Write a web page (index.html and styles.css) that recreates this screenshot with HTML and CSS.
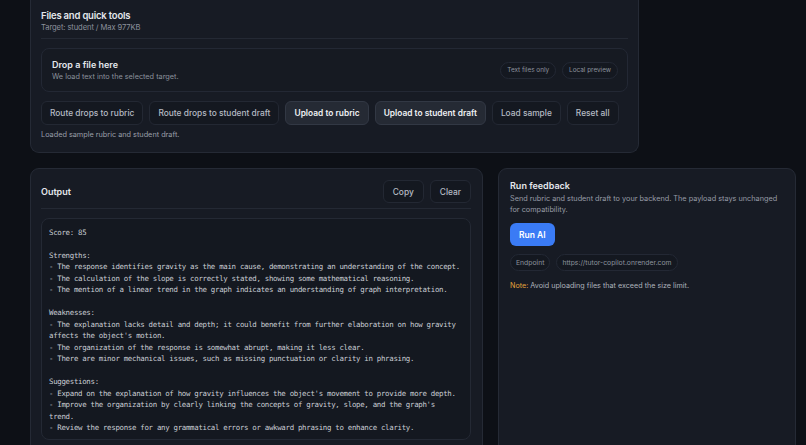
FILE: index.html
```html
<!DOCTYPE html>
<html lang="en">
<head>
    <meta charset="UTF-8">
    <meta name="viewport" content="width=device-width, initial-scale=1.0">
    <title>Tutor Copilot</title>
    <link rel="stylesheet" href="styles.css">
</head>
<body>
    <div class="page">
        <!-- Files and quick tools -->
        <section class="panel tools-panel">
            <div class="panel-head">
                <h2>Files and quick tools</h2>
                <p class="muted">Target: student / Max 977KB</p>
            </div>

            <div class="drop-zone">
                <div>
                    <h3>Drop a file here</h3>
                    <p class="muted">We load text into the selected target.</p>
                </div>
                <div class="chips">
                    <span class="chip">Text files only</span>
                    <span class="chip">Local preview</span>
                </div>
            </div>

            <div class="button-row">
                <button class="btn">Route drops to rubric</button>
                <button class="btn">Route drops to student draft</button>
                <button class="btn strong">Upload to rubric</button>
                <button class="btn strong">Upload to student draft</button>
                <button class="btn">Load sample</button>
                <button class="btn">Reset all</button>
            </div>

            <p class="status">Loaded sample rubric and student draft.</p>
        </section>

        <div class="columns">
            <!-- Output -->
            <section class="panel output-panel">
                <div class="output-head">
                    <h2>Output</h2>
                    <div class="head-actions">
                        <button class="btn">Copy</button>
                        <button class="btn">Clear</button>
                    </div>
                </div>
                <pre class="output-box">Score: 85

Strengths:
- The response identifies gravity as the main cause, demonstrating an understanding of the concept.
- The calculation of the slope is correctly stated, showing some mathematical reasoning.
- The mention of a linear trend in the graph indicates an understanding of graph interpretation.

Weaknesses:
- The explanation lacks detail and depth; it could benefit from further elaboration on how gravity affects the object's motion.
- The organization of the response is somewhat abrupt, making it less clear.
- There are minor mechanical issues, such as missing punctuation or clarity in phrasing.

Suggestions:
- Expand on the explanation of how gravity influences the object's movement to provide more depth.
- Improve the organization by clearly linking the concepts of gravity, slope, and the graph's trend.
- Review the response for any grammatical errors or awkward phrasing to enhance clarity.</pre>
            </section>

            <!-- Run feedback -->
            <section class="panel run-panel">
                <h3>Run feedback</h3>
                <p class="muted desc">Send rubric and student draft to your backend. The payload stays unchanged for compatibility.</p>
                <button class="btn-primary">Run AI</button>
                <div class="chips endpoint">
                    <span class="chip">Endpoint</span>
                    <span class="chip">https://tutor-copilot.onrender.com</span>
                </div>
                <p class="note"><span class="note-label">Note:</span> Avoid uploading files that exceed the size limit.</p>
            </section>
        </div>
    </div>
</body>
</html>
```

FILE: styles.css
```css
html, body {
    margin: 0;
    height: 100%;
    overflow: hidden;
}

body {
    font-family: Inter, "Noto Sans", sans-serif;
    background-color: #0d1016;
    color: #e4e7ec;
}

h2, h3, p {
    margin: 0;
}

.page {
    padding: 0 10px 0 30px;
}

.panel {
    background-color: #171b24;
    border: 1px solid #252a35;
    border-radius: 9px;
    box-sizing: border-box;
}

.muted {
    color: #8b919c;
}

/* top panel */
.tools-panel {
    width: 609px;
    padding: 10px 10px 12px 10px;
    border-top: none;
    border-top-left-radius: 0;
    border-top-right-radius: 0;
}

.panel-head {
    padding-bottom: 5px;
    border-bottom: 1px solid #242934;
}

.panel-head h2 {
    font-size: 9.5px;
    font-weight: 600;
    line-height: 12px;
    letter-spacing: -0.2px;
}

.panel-head .muted {
    margin-top: 1px;
    font-size: 7.6px;
    line-height: 10px;
    letter-spacing: -0.1px;
}

.drop-zone {
    margin-top: 9px;
    height: 44px;
    box-sizing: border-box;
    padding: 0 9px 0 10px;
    border: 1px solid #232834;
    border-radius: 8px;
    background-color: #161a22;
    display: flex;
    align-items: center;
    justify-content: space-between;
}

.drop-zone h3 {
    font-size: 9px;
    font-weight: 600;
    line-height: 11px;
}

.drop-zone .muted {
    margin-top: 2px;
    font-size: 7.3px;
    line-height: 10px;
}

.chips {
    display: flex;
    gap: 6px;
}

.chip {
    display: inline-block;
    height: 17px;
    line-height: 15px;
    box-sizing: border-box;
    padding: 0 6px;
    border: 1px solid #232834;
    border-radius: 9px;
    background-color: #141820;
    color: #8d939e;
    font-size: 6.4px;
}

.button-row {
    display: flex;
    gap: 6px;
    margin-top: 9px;
}

.btn {
    flex: none;
    height: 24px;
    padding: 0 8px;
    border: 1px solid #232833;
    border-radius: 6px;
    background-color: #141820;
    color: #b6bbc4;
    font-family: Inter, "Noto Sans", sans-serif;
    font-size: 8.4px;
    font-weight: 500;
    white-space: nowrap;
    cursor: pointer;
}

.btn.strong {
    background-color: #252a34;
    border-color: #323844;
    color: #eef0f3;
    font-weight: 600;
}

.status {
    margin-top: 5px;
    font-size: 7.3px;
    line-height: 10px;
    color: #9a9fa9;
}

/* bottom columns */
.columns {
    display: flex;
    gap: 15px;
    margin-top: 15px;
}

.output-panel {
    width: 453px;
    padding: 11px 11px 11px 10px;
}

.output-head {
    display: flex;
    align-items: center;
    justify-content: space-between;
    padding-bottom: 5px;
    border-bottom: 1px solid #242934;
}

.output-head h2 {
    font-size: 9px;
    font-weight: 600;
}

.head-actions {
    display: flex;
    gap: 6px;
}

.head-actions .btn {
    height: 23px;
    padding: 0 9px;
    font-size: 8.4px;
}

.output-box {
    margin: 9px 0 0 0;
    height: 222px;
    box-sizing: border-box;
    padding: 8px 7px 8px 7px;
    border: 1px solid #242934;
    border-radius: 8px;
    background-color: #141820;
    color: #c9cdd4;
    font-family: "DejaVu Sans Mono", "Liberation Mono", monospace;
    font-size: 7.4px;
    letter-spacing: -0.3px;
    line-height: 11.47px;
    white-space: pre-wrap;
    overflow: hidden;
}

.run-panel {
    flex: 1;
    height: 300px;
    padding: 11px 11px;
}

.run-panel h3 {
    font-size: 9px;
    font-weight: 600;
    line-height: 12px;
}

.desc {
    margin-top: 1px;
    font-size: 7.3px;
    line-height: 11px;
    color: #979ca7;
}

.btn-primary {
    display: block;
    margin-top: 8px;
    height: 23px;
    padding: 0 9px;
    border: none;
    border-radius: 6px;
    background-color: #3a7bf5;
    color: #ffffff;
    font-family: Inter, "Noto Sans", sans-serif;
    font-size: 8.5px;
    font-weight: 600;
    cursor: pointer;
}

.endpoint {
    margin-top: 8px;
}

.endpoint .chip {
    height: 17px;
    line-height: 15px;
    padding: 0 5px;
    font-size: 6.8px;
}

.note {
    margin-top: 10px;
    font-size: 7.2px;
    line-height: 10px;
    color: #aeb3bc;
}

.note-label {
    color: #e2a23b;
}
```
